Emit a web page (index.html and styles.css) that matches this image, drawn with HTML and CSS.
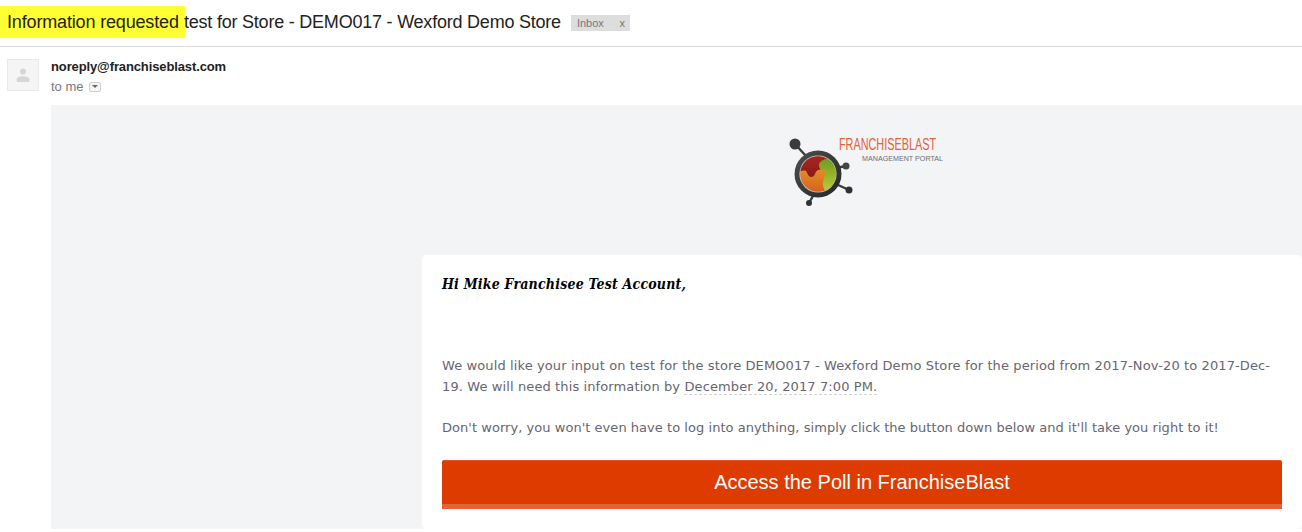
FILE: index.html
```html
<!DOCTYPE html>
<html lang="en">
  <head>
    <meta charset="UTF-8" />
    <title>Information requested</title>
    <link rel="stylesheet" href="styles.css">
  </head>
  <body>
    <div class="subject_bar">
      <h2 class="subject"><span class="mark">Information requested </span>test for Store - DEMO017 - Wexford Demo Store</h2>
      <span class="tag"><span>Inbox</span><span>x</span></span>
    </div>
    <div class="message">
      <div class="avatar">
        <svg width="14" height="14" viewBox="0 0 14 14">
          <circle cx="7" cy="3.6" r="3" fill="#d6d6d6" />
          <path d="M0.7 14V11.2C0.7 9.2 3.7 8.2 7 8.2S13.3 9.2 13.3 11.2V14Z" fill="#d6d6d6" />
        </svg>
      </div>
      <div class="message_body">
        <div class="sender">noreply@franchiseblast.com</div>
        <div class="to">to me <span class="to_arrow"></span></div>
        <div class="mail">
          <div class="logo_row">
            <svg class="logo" width="200" height="81" viewBox="0 -5 200 81">
              <defs>
                <linearGradient id="ring" x1="0" y1="0" x2="1" y2="1">
                  <stop offset="0" stop-color="#4e4e4e" />
                  <stop offset="1" stop-color="#262626" />
                </linearGradient>
                <linearGradient id="red" x1="0" y1="0" x2="0" y2="1">
                  <stop offset="0" stop-color="#a82420" />
                  <stop offset="1" stop-color="#8a1c1c" />
                </linearGradient>
                <linearGradient id="green" x1="0" y1="0" x2="0" y2="1">
                  <stop offset="0" stop-color="#6f9a1e" />
                  <stop offset="1" stop-color="#b8cc3a" />
                </linearGradient>
                <linearGradient id="orange" x1="0" y1="0" x2="0" y2="1">
                  <stop offset="0" stop-color="#eca52e" />
                  <stop offset="1" stop-color="#d6621e" />
                </linearGradient>
                <filter id="soft">
                  <feGaussianBlur stdDeviation="0.35" />
                </filter>
              </defs>
              <g filter="url(#soft)">
                <g stroke="#3a3a3a" stroke-width="2.4">
                  <line x1="11" y1="8" x2="22" y2="20" />
                  <line x1="52" y1="32" x2="62" y2="30" />
                  <line x1="52" y1="48" x2="65" y2="54" />
                  <line x1="29" y1="60" x2="25" y2="67" />
                </g>
                <circle cx="11" cy="8" r="5.5" fill="#3a3a3a" />
                <circle cx="62" cy="30" r="3.5" fill="#444444" />
                <circle cx="65" cy="54" r="3.5" fill="#333333" />
                <circle cx="25" cy="67" r="3" fill="#333333" />
                <circle cx="34" cy="38" r="23.5" fill="url(#ring)" />
                <circle cx="34" cy="38" r="18.6" fill="#c4c4c4" />
                <circle cx="34" cy="38" r="17.8" fill="url(#orange)" />
                <path d="M43 22.6A17.8 17.8 0 0 1 41 54.4C38 50 39 46 40 42C42 38 42 35 40 34C37 34 35 32 35 29C35 26 39 24 43 22.6Z" fill="url(#green)" />
                <path d="M16.4 35A17.8 17.8 0 0 1 43 22.6C39 24 35 26 35 29C35 32 37 34 37 34C34 33 32 35 31 38C30 41 27 42 25 40C23 38 23 35 21 34.5C19 34.5 18 35 16.4 35Z" fill="url(#red)" />
              </g>
              <text x="55" y="14" class="logo_name" textLength="97" lengthAdjust="spacingAndGlyphs">FRANCHISEBLAST</text>
              <text x="78" y="25" class="logo_sub" textLength="81" lengthAdjust="spacingAndGlyphs">MANAGEMENT PORTAL</text>
            </svg>
          </div>
          <div class="card">
            <p class="hello">Hi Mike Franchisee Test Account,</p>
            <p class="copy">We would like your input on test for the store DEMO017 - Wexford Demo Store for the period from 2017-Nov-20 to 2017-Dec-19. We will need this information by <span class="date">December 20, 2017 7:00 PM.</span></p>
            <p class="copy copy_second">Don't worry, you won't even have to log into anything, simply click the button down below and it'll take you right to it!</p>
            <a class="poll_btn" href="#">Access the Poll in FranchiseBlast</a>
          </div>
        </div>
      </div>
    </div>
  </body>
</html>
```

FILE: styles.css
```css
html,
body {
  height: 100%;
  overflow: hidden;
}
body {
  margin: 0;
  font-family: "Liberation Sans", Arial, sans-serif;
  background-color: #ffffff;
  color: #222222;
}
.subject_bar {
  display: flex;
  align-items: flex-start;
  box-sizing: border-box;
  height: 47px;
  padding-top: 6px;
  border-bottom: 1px solid #d8d8d8;
}
.subject {
  margin: 0;
  font-size: 18px;
  font-weight: normal;
  letter-spacing: -0.22px;
  line-height: 32px;
  height: 32px;
  white-space: nowrap;
}
.mark {
  display: inline-block;
  background: #ffff33;
  letter-spacing: -0.16px;
  padding-left: 7px;
  width: 178px;
  height: 32px;
  margin-right: -1px;
}
.tag {
  display: flex;
  justify-content: space-between;
  width: 48px;
  height: 16px;
  line-height: 16px;
  margin-left: 10px;
  margin-top: 9px;
  padding: 0 5px 0 6px;
  font-size: 11px;
  color: #777777;
  background: #dddddd;
}
.message {
  display: flex;
  padding: 12px 0 0 7px;
}
.avatar {
  display: flex;
  align-items: flex-end;
  justify-content: center;
  box-sizing: border-box;
  flex: none;
  width: 32px;
  height: 32px;
  padding-bottom: 8px;
  background: #f5f5f5;
  border: 1px solid #e9e9e9;
}
.message_body {
  flex: 1;
  margin-left: 12px;
}
.sender {
  font-size: 13px;
  font-weight: bold;
  letter-spacing: -0.12px;
  line-height: 16px;
}
.to {
  display: flex;
  align-items: center;
  gap: 5px;
  margin-top: 3px;
  height: 16px;
  font-size: 13px;
  color: #777777;
}
.to_arrow {
  position: relative;
  box-sizing: border-box;
  width: 12px;
  height: 10px;
  margin-top: 2px;
  border: 1px solid #cfcfcf;
  border-radius: 2px;
  background: #f5f5f5;
}
.to_arrow::after {
  content: "";
  position: absolute;
  left: 2px;
  top: 2px;
  border: 3px solid transparent;
  border-top: 3px solid #666666;
  border-bottom: 0;
}
.mail {
  height: 424px;
  margin-top: 11px;
  background: #f3f4f6;
  overflow: hidden;
}
.logo_row {
  height: 150px;
  padding-left: 733px;
  box-sizing: border-box;
  padding-top: 26px;
}
.logo {
  display: block;
}
.logo_name {
  font-family: "Liberation Sans", Arial, sans-serif;
  font-size: 16px;
  fill: #e2603a;
}
.logo_sub {
  font-family: "Liberation Sans", Arial, sans-serif;
  font-size: 7px;
  fill: #6f6f6f;
}
.card {
  box-sizing: border-box;
  height: 274px;
  margin-left: 371px;
  padding: 20px;
  background: #ffffff;
  border-radius: 5px;
}
.hello {
  margin: 0;
  font-family: "DejaVu Serif", Georgia, serif;
  font-stretch: condensed;
  font-size: 14px;
  font-weight: bold;
  font-style: italic;
  letter-spacing: 0.2px;
  line-height: 18px;
  color: #000000;
}
.copy {
  margin: 62px 0 0;
  padding-right: 6px;
  font-family: "DejaVu Sans", Verdana, sans-serif;
  font-size: 13px;
  letter-spacing: 0.11px;
  line-height: 21px;
  color: #666670;
}
.copy_second {
  margin-top: 20px;
  letter-spacing: 0.04px;
}
.date {
  border-bottom: 1px dashed #d4d4d4;
}
.poll_btn {
  display: block;
  box-sizing: border-box;
  height: 49px;
  margin-top: 22px;
  line-height: 43px;
  font-size: 20px;
  text-align: center;
  text-decoration: none;
  color: #ffffff;
  background: #dd3b00;
  border-radius: 2px 2px 0 0;
  border-top: 1px solid #e2561f;
  border-bottom: 5px solid #e56434;
}
```
